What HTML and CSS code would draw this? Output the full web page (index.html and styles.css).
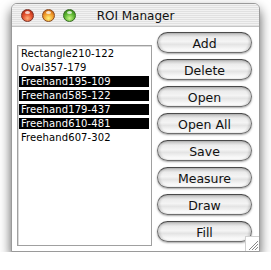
FILE: index.html
```html
<!DOCTYPE html>
<html lang="en">
<head>
    <meta charset="UTF-8">
    <title>ROI Manager</title>
    <link rel="stylesheet" href="styles.css">
</head>
<body>
    <div class="window">
        <div class="titlebar">
            <div class="lights">
                <span class="light red"></span>
                <span class="light yellow"></span>
                <span class="light green"></span>
            </div>
            <div class="title">ROI Manager</div>
            <div></div>
        </div>
        <div class="content">
            <ul class="roi-list">
                <li>Rectangle210-122</li>
                <li>Oval357-179</li>
                <li class="selected">Freehand195-109</li>
                <li class="selected">Freehand585-122</li>
                <li class="selected">Freehand179-437</li>
                <li class="selected">Freehand610-481</li>
                <li>Freehand607-302</li>
            </ul>
            <div class="buttons">
                <button>Add</button>
                <button>Delete</button>
                <button>Open</button>
                <button>Open All</button>
                <button>Save</button>
                <button>Measure</button>
                <button>Draw</button>
                <button>Fill</button>
            </div>
        </div>
        <svg class="grip" width="13" height="14" viewBox="0 0 13 14">
            <line x1="3" y1="13" x2="12" y2="4" stroke="#8a8a8a" stroke-width="1"/>
            <line x1="6" y1="13" x2="12" y2="7" stroke="#8a8a8a" stroke-width="1"/>
            <line x1="9" y1="13" x2="12" y2="10" stroke="#8a8a8a" stroke-width="1"/>
        </svg>
    </div>
</body>
</html>
```

FILE: styles.css
```css
body {
    margin: 0;
    background: #fff;
    font-family: "DejaVu Sans", Verdana, sans-serif;
}

.window {
    position: relative;
    box-sizing: border-box;
    width: 249px;
    height: 249px;
    margin: 3px 0 0 11px;
    background: #fff;
    border: 1px solid #9a9a9a;
    border-radius: 6px 6px 0 0;
    box-shadow: 0 6px 12px rgba(0, 0, 0, 0.65);
}

.titlebar {
    display: grid;
    grid-template-columns: 1fr auto 1fr;
    align-items: center;
    height: 22px;
    border-bottom: 1px solid #c4c4c4;
    border-radius: 5px 5px 0 0;
    background: repeating-linear-gradient(to bottom, #f2f2f2 0, #f2f2f2 1px, #e1e1e1 1px, #e1e1e1 2px);
}

.lights {
    display: flex;
    gap: 8px;
    padding-left: 9px;
}

.light {
    position: relative;
    width: 13px;
    height: 13px;
    box-sizing: border-box;
    border-radius: 50%;
}

.light::before {
    content: "";
    position: absolute;
    left: 3px;
    top: 1px;
    width: 5px;
    height: 3px;
    border-radius: 50%;
    background: rgba(255, 255, 255, 0.75);
}

.red {
    background: radial-gradient(circle at 50% 75%, #ffae7a 0%, #e4522e 45%, #a3200f 100%);
    border: 1px solid #7d3126;
}

.yellow {
    background: radial-gradient(circle at 50% 75%, #fff27a 0%, #f09a2a 50%, #b24e0c 100%);
    border: 1px solid #8a4a1e;
}

.green {
    background: radial-gradient(circle at 50% 75%, #c6f585 0%, #5cb631 50%, #2c7410 100%);
    border: 1px solid #356a22;
}

.title {
    font-size: 12px;
    color: #111;
    padding-top: 1px;
}

.content {
    display: flex;
    align-items: flex-start;
    padding: 5px 0 0 5px;
}

.roi-list {
    box-sizing: border-box;
    width: 135px;
    height: 201px;
    margin: 13px 0 0 0;
    padding: 2px 2px 2px 1px;
    list-style: none;
    border: 1px solid #a0a0a0;
    box-shadow: inset 1px 1px 0 #dadada;
    font-size: 10px;
    letter-spacing: 0.1px;
    color: #000;
}

.roi-list li {
    height: 11px;
    line-height: 11px;
    margin-bottom: 3px;
    padding-left: 2px;
    white-space: nowrap;
}

.roi-list li.selected {
    background: #000;
    color: #fff;
}

.buttons {
    display: flex;
    flex-direction: column;
    gap: 6px;
    margin-left: 5px;
}

.buttons button {
    width: 95px;
    height: 21px;
    padding: 1px 0 0 0;
    font-family: "DejaVu Sans", Verdana, sans-serif;
    font-size: 12.5px;
    color: #111;
    border: 1px solid #6e6e6e;
    border-top-color: #4a4a4a;
    border-radius: 11px;
    background: linear-gradient(to bottom, #bdbdbd 0%, #ececec 22%, #f4f4f4 45%, #e4e4e4 60%, #f6f6f6 82%, #ffffff 100%);
    box-shadow: 0 1px 2px rgba(0, 0, 0, 0.35), inset 2px 0 2px rgba(0, 0, 0, 0.12), inset -2px 0 2px rgba(0, 0, 0, 0.12);
}

.grip {
    position: absolute;
    right: 0;
    bottom: 0;
    border-left: 1px solid #d0d0d0;
    border-top: 1px solid #d0d0d0;
    background: #fff;
}
```
